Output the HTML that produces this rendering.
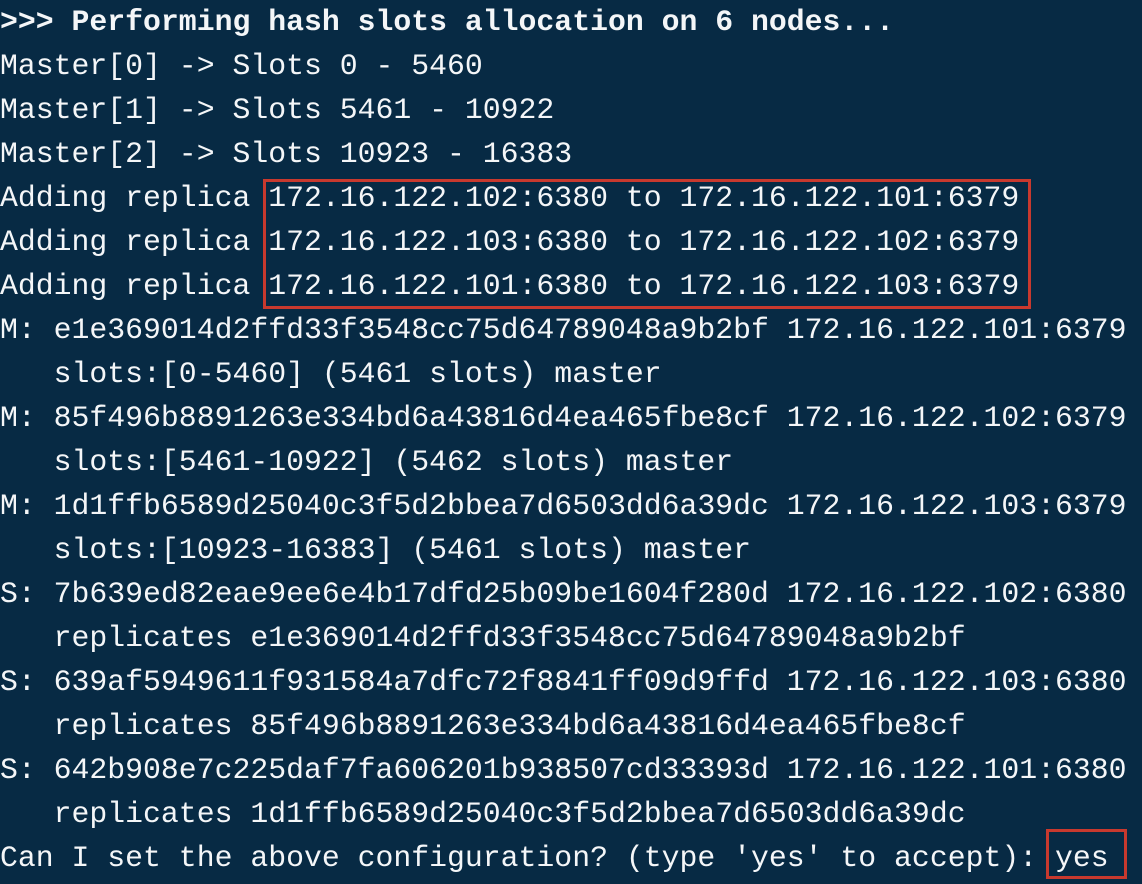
<!DOCTYPE html><html><head><meta charset="utf-8"><style>
html,body{margin:0;padding:0;width:1142px;height:884px;overflow:hidden;background:#072a44;}
pre{margin:0;position:absolute;left:0;top:0;font-family:"Liberation Mono",monospace;font-size:29.8px;line-height:44px;color:#f4f6f8;white-space:pre;}
.b{font-weight:bold}
.box{position:absolute;border:3px solid #c8392e;box-sizing:border-box}
</style></head><body>
<pre><span class="b">&gt;&gt;&gt; Performing hash slots allocation on 6 nodes...</span>
Master[0] -&gt; Slots 0 - 5460
Master[1] -&gt; Slots 5461 - 10922
Master[2] -&gt; Slots 10923 - 16383
Adding replica 172.16.122.102:6380 to 172.16.122.101:6379
Adding replica 172.16.122.103:6380 to 172.16.122.102:6379
Adding replica 172.16.122.101:6380 to 172.16.122.103:6379
M: e1e369014d2ffd33f3548cc75d64789048a9b2bf 172.16.122.101:6379
   slots:[0-5460] (5461 slots) master
M: 85f496b8891263e334bd6a43816d4ea465fbe8cf 172.16.122.102:6379
   slots:[5461-10922] (5462 slots) master
M: 1d1ffb6589d25040c3f5d2bbea7d6503dd6a39dc 172.16.122.103:6379
   slots:[10923-16383] (5461 slots) master
S: 7b639ed82eae9ee6e4b17dfd25b09be1604f280d 172.16.122.102:6380
   replicates e1e369014d2ffd33f3548cc75d64789048a9b2bf
S: 639af5949611f931584a7dfc72f8841ff09d9ffd 172.16.122.103:6380
   replicates 85f496b8891263e334bd6a43816d4ea465fbe8cf
S: 642b908e7c225daf7fa606201b938507cd33393d 172.16.122.101:6380
   replicates 1d1ffb6589d25040c3f5d2bbea7d6503dd6a39dc
Can I set the above configuration? (type 'yes' to accept): yes</pre>
<div class="box" style="left:263px;top:179px;width:768px;height:130px"></div>
<div class="box" style="left:1046px;top:829px;width:81px;height:50px"></div>
</body></html>
